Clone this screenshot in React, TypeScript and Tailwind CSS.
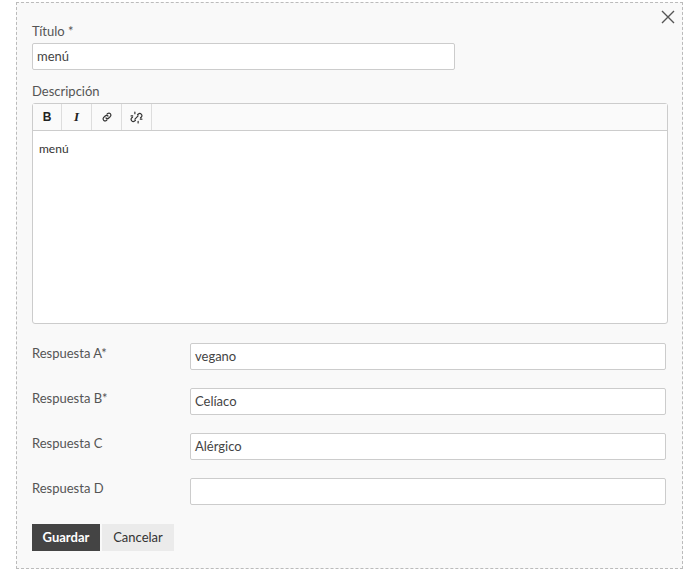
import React from "react";

const F = { fontFamily: "Lato, 'Open Sans', sans-serif" };

function Row({ label, value, mt }: { label: string; value: string; mt: string }) {
  return (
    <div className={`flex items-start ${mt}`}>
      <div className="w-[158px] pt-[1px] text-[13px] text-[#555]">{label}</div>
      <div className="w-[476px] h-[27px] bg-white border border-[#ccc] rounded-[2px] px-[4px] flex items-center text-[13px] text-[#444]">{value}</div>
    </div>
  );
}

export default function App() {
  return (
    <div className="bg-white w-[700px] h-[578px] pt-[2px] pl-[16px]" style={F}>
      <div className="relative w-[667px] h-[567px] bg-[#f9f9f9] border border-dashed border-[#bbb] pl-[15px] pt-[20px]">
        <svg className="absolute right-[7px] top-[7px]" width="14" height="14" viewBox="0 0 14 14">
          <path d="M1 1L13 13M13 1L1 13" stroke="#555" strokeWidth="1.4" />
        </svg>
        <div className="text-[13px] text-[#555] leading-[16px]">Título *</div>
        <div className="mt-[4px] w-[423px] h-[27px] bg-white border border-[#ccc] rounded-[2px] px-[4px] flex items-center text-[13px] text-[#444]">menú</div>
        <div className="mt-[13px] text-[13px] text-[#555] leading-[16px]">Descripción</div>
        <div className="mt-[4px] w-[636px] h-[221px] bg-white border border-[#ccc] rounded-[3px] flex flex-col">
          <div className="h-[27px] border-b border-[#ccc] bg-[#fafafa] flex">
            <div className="w-[29px] border-r border-[#ddd] flex items-center justify-center text-[12px] font-bold text-[#222]" style={{ fontFamily: "'Liberation Sans', sans-serif" }}>B</div>
            <div className="w-[30px] border-r border-[#ddd] flex items-center justify-center text-[13px] italic font-bold text-[#222]" style={{ fontFamily: "'Liberation Serif', serif" }}>I</div>
            <div className="w-[30px] border-r border-[#ddd] flex items-center justify-center">
              <svg width="12" height="12" viewBox="0 0 24 24" fill="none" stroke="#333" strokeWidth="2.4" strokeLinecap="round"><path d="M10 14a4 4 0 0 0 5.6 0l3.4-3.4a4 4 0 0 0-5.6-5.6L12 6.4"/><path d="M14 10a4 4 0 0 0-5.6 0L5 13.4a4 4 0 0 0 5.6 5.6L12 17.6"/></svg>
            </div>
            <div className="w-[30px] border-r border-[#ddd] flex items-center justify-center">
              <svg width="13" height="13" viewBox="0 0 24 24" fill="none" stroke="#333" strokeWidth="2.2" strokeLinecap="round"><path d="M14 7l1.5-1.5a4 4 0 0 1 5.6 5.6L19.5 12.5"/><path d="M10 17l-1.5 1.5a4 4 0 0 1-5.6-5.6L4.5 11.5"/><path d="M9 2v3M2 9h3M15 22v-3M22 15h-3M9 15l6-6"/></svg>
            </div>
          </div>
          <div className="px-[6px] pt-[9px] text-[12px] text-[#333]">menú</div>
        </div>
        <Row label="Respuesta A*" value="vegano" mt="mt-[19px]" />
        <Row label="Respuesta B*" value="Celíaco" mt="mt-[18px]" />
        <Row label="Respuesta C" value="Alérgico" mt="mt-[18px]" />
        <Row label="Respuesta D" value="" mt="mt-[18px]" />
        <div className="mt-[19px] flex gap-[2px]">
          <div className="w-[68px] h-[27px] bg-[#444] text-white text-[13px] font-bold flex items-center justify-center">Guardar</div>
          <div className="w-[72px] h-[27px] bg-[#ebebeb] text-[#333] text-[13px] flex items-center justify-center">Cancelar</div>
        </div>
      </div>
    </div>
  );
}
